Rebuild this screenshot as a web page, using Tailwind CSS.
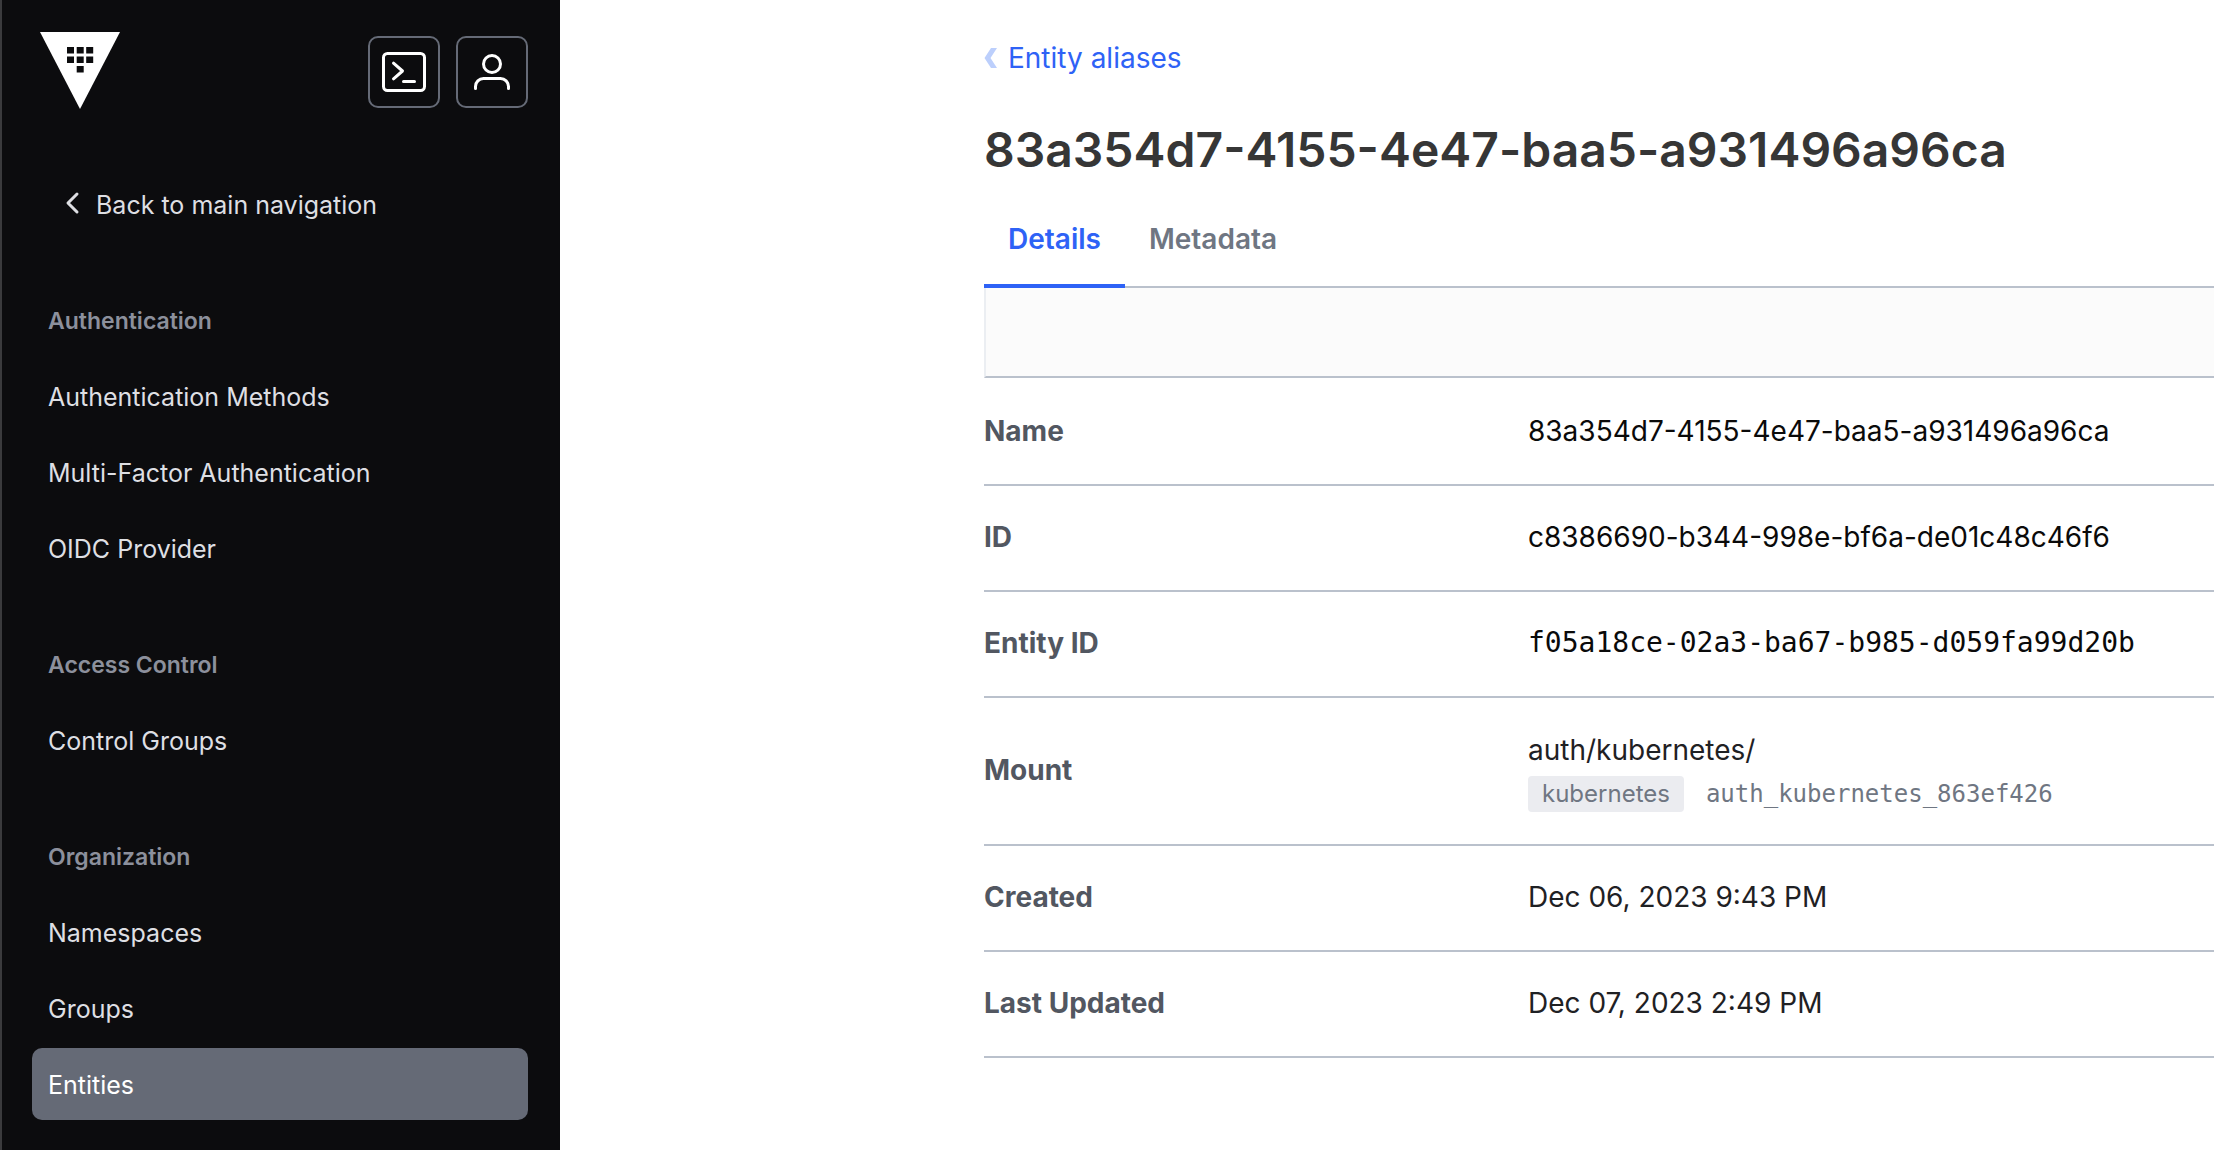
<!DOCTYPE html>
<html lang="en">
<head>
<meta charset="utf-8">
<title>Entity alias</title>
<script src="https://cdn.jsdelivr.net/npm/@tailwindcss/browser@4"></script>
</head>
<body class="min-h-screen flex bg-white font-['Inter',sans-serif]">
<aside class="w-[560px] shrink-0 min-h-screen bg-[#0c0c0e] border-l-2 border-[#3b3b3d] pl-[30px] pr-8 text-[#dedfe3]">
  <header class="flex items-start justify-between pt-8 pl-2">
    <a href="#" aria-label="Vault home">
      <svg class="block w-20 h-[77px]" viewBox="0 0 80 77"><path fill="#fff" d="M0 0h80L40 77z"/><path fill="#0c0c0e" d="M27 15h7v6.500h-7zM36.700 15h7v6.500h-7zM46.200 15h7v6.500h-7zM27 24.500h7V31h-7zM36.700 24.500h7V31h-7zM46.200 24.500h7V31h-7zM36.700 34h7v6.500h-7z"/></svg>
    </a>
    <div class="flex gap-4 mt-1">
      <button type="button" aria-label="Console" class="size-[72px] flex items-center justify-center rounded-[10px] border-2 border-[#656a76]">
        <svg class="size-12" viewBox="0 0 48 48" fill="none" stroke="#fff" stroke-width="3" stroke-linecap="round" stroke-linejoin="round"><rect x="3.500" y="5.500" width="41" height="37" rx="4"/><path d="M13.500 15.200l9 7.800-9 7.800M23.500 33.500h11"/></svg>
      </button>
      <button type="button" aria-label="User menu" class="size-[72px] flex items-center justify-center rounded-[10px] border-2 border-[#656a76]">
        <svg class="size-12" viewBox="0 0 48 48" fill="none" stroke="#fff" stroke-width="3" stroke-linecap="round"><circle cx="24" cy="16" r="8.500"/><path d="M7.500 40.500v-2a8 8 0 0 1 8-8h17a8 8 0 0 1 8 8v2"/></svg>
      </button>
    </div>
  </header>
  <nav class="flex flex-col gap-11 pt-[59px] text-[25px] leading-8">
    <a href="#" class="flex items-center h-[72px] pt-0.5 gap-3 pl-7">
      <svg class="size-6 -mt-1" viewBox="0 0 24 24" fill="none" stroke="currentColor" stroke-width="3" stroke-linecap="round" stroke-linejoin="round"><path d="M17 3l-9 9 9 9"/></svg>
      Back to main navigation
    </a>
    <section class="flex flex-col gap-1">
      <h2 class="flex items-center h-[72px] pt-0.5 px-4 text-[23px] font-semibold text-[#8c909c]">Authentication</h2>
      <a href="#" class="flex items-center h-[72px] pt-0.5 px-4">Authentication Methods</a>
      <a href="#" class="flex items-center h-[72px] pt-0.5 px-4">Multi-Factor Authentication</a>
      <a href="#" class="flex items-center h-[72px] pt-0.5 px-4">OIDC Provider</a>
    </section>
    <section class="flex flex-col gap-1">
      <h2 class="flex items-center h-[72px] pt-0.5 px-4 text-[23px] font-semibold text-[#8c909c]">Access Control</h2>
      <a href="#" class="flex items-center h-[72px] pt-0.5 px-4">Control Groups</a>
    </section>
    <section class="flex flex-col gap-1">
      <h2 class="flex items-center h-[72px] pt-0.5 px-4 text-[23px] font-semibold text-[#8c909c]">Organization</h2>
      <a href="#" class="flex items-center h-[72px] pt-0.5 px-4">Namespaces</a>
      <a href="#" class="flex items-center h-[72px] pt-0.5 px-4">Groups</a>
      <a href="#" aria-current="page" class="flex items-center h-[72px] pt-0.5 px-4 rounded-[10px] bg-[#656a76] text-white">Entities</a>
    </section>
  </nav>
</aside>
<main class="flex-1 min-w-0 pl-[424px] pt-[38px] text-[28px] leading-10">
  <a href="#" class="flex items-center text-[#2e62f6]">
    <svg class="w-6 h-5" viewBox="0 0 24 20" fill="#bccffc"><path d="M7 0h6L6.500 10l6.500 10H7L.5 10z"/></svg>
    Entity aliases
  </a>
  <h1 class="mt-[42px] text-[48px] leading-[60px] font-semibold text-[#363636] whitespace-nowrap">83a354d7-4155-4e47-baa5-a931496a96ca</h1>
  <nav class="flex mt-6 h-[84px] border-b-2 border-[#bac1cc]">
    <a href="#" aria-current="page" class="px-6 pt-[15px] h-[84px] border-b-4 border-[#2e62f6] font-semibold text-[#2e62f6]">Details</a>
    <a href="#" class="px-6 pt-[15px] font-semibold text-[#6f7682]">Metadata</a>
  </nav>
  <div class="h-[90px] bg-[#fbfbfb] border-l-2 border-l-[#ebeef2] border-b-2 border-b-[#bac1cc]"></div>
  <table class="w-full mt-0.5 border-separate border-spacing-0 text-left text-[#0a0a0a]">
    <tbody>
      <tr><th scope="row" class="w-[544px] h-[106px] pb-0.5 border-b-2 border-[#bac1cc] font-bold text-[#525761]">Name</th><td class="pb-0.5 border-b-2 border-[#bac1cc]">83a354d7-4155-4e47-baa5-a931496a96ca</td></tr>
      <tr><th scope="row" class="h-[106px] pb-0.5 border-b-2 border-[#bac1cc] font-bold text-[#525761]">ID</th><td class="pb-0.5 border-b-2 border-[#bac1cc]">c8386690-b344-998e-bf6a-de01c48c46f6</td></tr>
      <tr><th scope="row" class="h-[106px] pb-0.5 border-b-2 border-[#bac1cc] font-bold text-[#525761]">Entity ID</th><td class="pb-0.5 border-b-2 border-[#bac1cc] font-['DejaVu_Sans_Mono',monospace]">f05a18ce-02a3-ba67-b985-d059fa99d20b</td></tr>
      <tr><th scope="row" class="h-[148px] pb-0.5 border-b-2 border-[#bac1cc] font-bold text-[#525761]">Mount</th><td class="border-b-2 border-[#bac1cc] text-[#1f2124]">auth/kubernetes/
        <div class="flex items-center gap-[22px] mt-1.5 text-[24px] leading-9 text-[#6f7682]"><span class="px-3.5 rounded bg-[#ebecf0]">kubernetes</span><code class="font-['DejaVu_Sans_Mono',monospace]">auth_kubernetes_863ef426</code></div></td></tr>
      <tr><th scope="row" class="h-[106px] pb-0.5 border-b-2 border-[#bac1cc] font-bold text-[#525761]">Created</th><td class="pb-0.5 border-b-2 border-[#bac1cc] text-[#1f2124]">Dec 06, 2023 9:43 PM</td></tr>
      <tr><th scope="row" class="h-[106px] pb-0.5 border-b-2 border-[#bac1cc] font-bold text-[#525761]">Last Updated</th><td class="pb-0.5 border-b-2 border-[#bac1cc] text-[#1f2124]">Dec 07, 2023 2:49 PM</td></tr>
    </tbody>
  </table>
</main>
</body>
</html>
